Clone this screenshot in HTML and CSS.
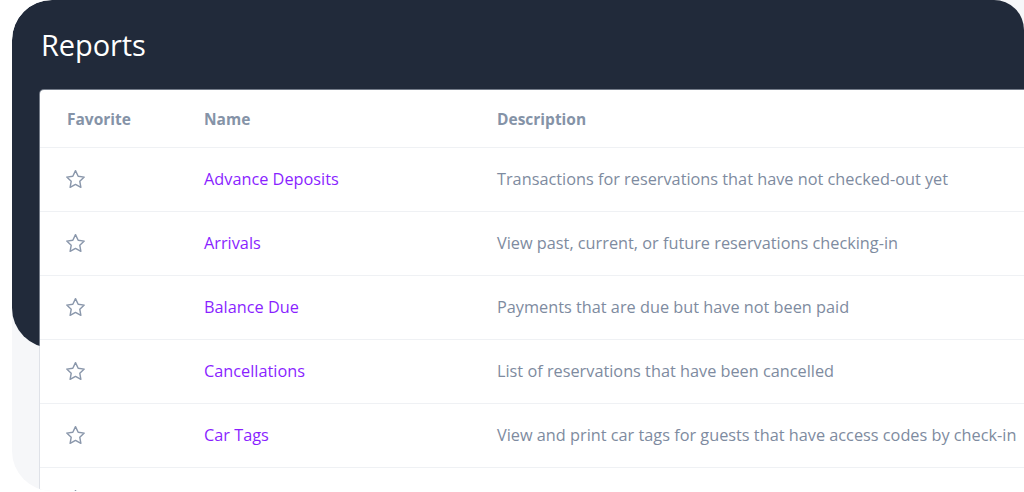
FILE: index.html
```html
<!DOCTYPE html>
<html>
<head>
<meta charset="utf-8">
<link rel="stylesheet" href="styles.css">
</head>
<body>
<div class="frame">
  <div class="hero">
    <h1 class="title">Reports</h1>
  </div>
  <div class="card">
    <div class="row head">
      <div class="c-fav">Favorite</div>
      <div class="c-name">Name</div>
      <div class="c-desc">Description</div>
    </div>
    <div class="row">
      <div class="c-fav"><svg class="star" viewBox="0 0 24 24"><path d="M12 2.8l2.8 5.8 6.3.9-4.6 4.4 1.1 6.3L12 17.2l-5.6 3 1.1-6.3-4.6-4.4 6.3-.9z"/></svg></div>
      <div class="c-name"><a class="link">Advance Deposits</a></div>
      <div class="c-desc">Transactions for reservations that have not checked-out yet</div>
    </div>
    <div class="row">
      <div class="c-fav"><svg class="star" viewBox="0 0 24 24"><path d="M12 2.8l2.8 5.8 6.3.9-4.6 4.4 1.1 6.3L12 17.2l-5.6 3 1.1-6.3-4.6-4.4 6.3-.9z"/></svg></div>
      <div class="c-name"><a class="link">Arrivals</a></div>
      <div class="c-desc">View past, current, or future reservations checking-in</div>
    </div>
    <div class="row">
      <div class="c-fav"><svg class="star" viewBox="0 0 24 24"><path d="M12 2.8l2.8 5.8 6.3.9-4.6 4.4 1.1 6.3L12 17.2l-5.6 3 1.1-6.3-4.6-4.4 6.3-.9z"/></svg></div>
      <div class="c-name"><a class="link">Balance Due</a></div>
      <div class="c-desc">Payments that are due but have not been paid</div>
    </div>
    <div class="row">
      <div class="c-fav"><svg class="star" viewBox="0 0 24 24"><path d="M12 2.8l2.8 5.8 6.3.9-4.6 4.4 1.1 6.3L12 17.2l-5.6 3 1.1-6.3-4.6-4.4 6.3-.9z"/></svg></div>
      <div class="c-name"><a class="link">Cancellations</a></div>
      <div class="c-desc">List of reservations that have been cancelled</div>
    </div>
    <div class="row">
      <div class="c-fav"><svg class="star" viewBox="0 0 24 24"><path d="M12 2.8l2.8 5.8 6.3.9-4.6 4.4 1.1 6.3L12 17.2l-5.6 3 1.1-6.3-4.6-4.4 6.3-.9z"/></svg></div>
      <div class="c-name"><a class="link">Car Tags</a></div>
      <div class="c-desc">View and print car tags for guests that have access codes by check-in</div>
    </div>
    <div class="row">
      <div class="c-fav"><svg class="star" viewBox="0 0 24 24"><path d="M12 2.8l2.8 5.8 6.3.9-4.6 4.4 1.1 6.3L12 17.2l-5.6 3 1.1-6.3-4.6-4.4 6.3-.9z"/></svg></div>
      <div class="c-name"></div>
      <div class="c-desc"></div>
    </div>
  </div>
</div>
</body>
</html>
```

FILE: styles.css
```css
html, body {
  margin: 0;
  padding: 0;
  background: #ffffff;
  overflow: hidden;
  width: 1024px;
  height: 492px;
}
body {
  font-family: "Open Sans", "Lato", sans-serif;
}
.frame {
  margin-left: 12px;
  width: 1012px;
  height: 491px;
  background: #f6f7f9;
  border-radius: 40px 0 0 40px;
  overflow: hidden;
}
.hero {
  height: 348px;
  background: #212a3a;
  border-radius: 40px 30px 0 40px;
  padding: 25px 0 0 29px;
  box-sizing: border-box;
}
.title {
  margin: 0;
  font-size: 29px;
  font-weight: 400;
  color: #ffffff;
  line-height: 40px;
  letter-spacing: -0.1px;
}
.card {
  margin-top: -258px;
  margin-left: 28px;
  width: 1100px;
  background: #ffffff;
  border-radius: 4px;
  box-shadow: 0 0 0 1px rgba(200, 206, 216, 0.5);
}
.row {
  display: flex;
  align-items: center;
  height: 64px;
  padding-bottom: 2px;
  border-bottom: 1px solid #eff1f4;
  box-sizing: border-box;
  font-size: 16.3px;
}
.row.head {
  height: 58px;
  padding-bottom: 0;
  font-size: 15.5px;
  font-weight: 700;
  color: #8593a7;
}
.c-fav {
  width: 137px;
  padding-left: 27px;
  display: flex;
  align-items: center;
}
.c-name {
  width: 293px;
}
.c-desc {
  flex: 1;
  color: #7e8ba0;
  white-space: nowrap;
}
.head .c-desc {
  color: #8593a7;
}
.link {
  color: #8a1fff;
  font-weight: 500;
  text-decoration: none;
}
.star {
  width: 23px;
  height: 23px;
  margin-left: -3px;
  margin-top: 1px;
  fill: none;
  stroke: #8a97ab;
  stroke-width: 1.5;
  stroke-linejoin: round;
}
```
